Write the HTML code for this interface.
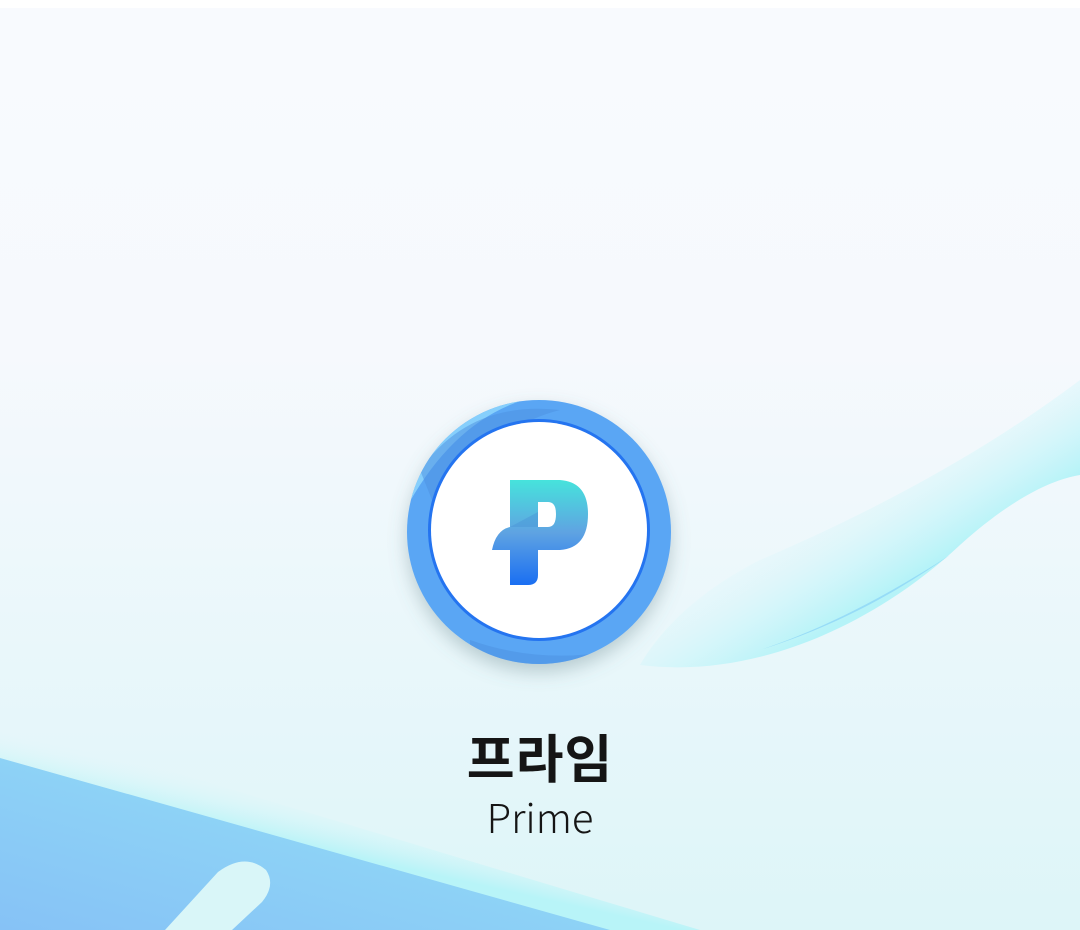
<!DOCTYPE html>
<html><head><meta charset="utf-8"><style>
html,body{margin:0;padding:0;width:1080px;height:930px;overflow:hidden;background:#fff}
svg{position:absolute;left:0;top:0}
.t1{position:absolute;left:0;width:1080px;text-align:center;top:718px;font:bold 52px "Liberation Sans","Noto Sans CJK KR",sans-serif;color:#151515;letter-spacing:1px}
.t2{position:absolute;left:0;width:1080px;text-align:center;top:787px;font:300 40px "Noto Sans CJK KR","Liberation Sans",sans-serif;color:#151515}
</style></head><body>
<svg width="1080" height="930" viewBox="0 0 1080 930">
<defs>
<linearGradient id="bg" x1="0" y1="0" x2="0" y2="1">
<stop offset="0" stop-color="#f8fafe"/><stop offset="0.37" stop-color="#f6f9fd"/><stop offset="1" stop-color="#ddf5f8"/></linearGradient>
<linearGradient id="wave" gradientUnits="userSpaceOnUse" x1="860" y1="610" x2="780" y2="480">
<stop offset="0" stop-color="#b5f3f8"/><stop offset="0.45" stop-color="#d6f6fa" stop-opacity="0.6"/><stop offset="1" stop-color="#f3f8fc" stop-opacity="0"/></linearGradient>
<linearGradient id="blue" x1="0" y1="1" x2="1" y2="0">
<stop offset="0" stop-color="#86c2f6"/><stop offset="1" stop-color="#95e2f7"/></linearGradient>
<linearGradient id="edge" gradientUnits="userSpaceOnUse" x1="300" y1="845" x2="310" y2="800">
<stop offset="0" stop-color="#b8f4f8"/><stop offset="1" stop-color="#e0f6f9" stop-opacity="0"/></linearGradient>
<linearGradient id="pg" x1="0" y1="0" x2="0" y2="1">
<stop offset="0" stop-color="#46e3dc"/><stop offset="0.5" stop-color="#5fa3e2"/><stop offset="1" stop-color="#1a6ff2"/></linearGradient>
<filter id="sh" x="-30%" y="-30%" width="160%" height="160%"><feDropShadow dx="0" dy="8" stdDeviation="9" flood-color="#5a7a80" flood-opacity="0.35"/></filter>
<clipPath id="cc"><circle cx="539" cy="532" r="132"/></clipPath>
</defs>
<rect x="0" y="8" width="1080" height="922" fill="url(#bg)"/>
<path d="M640 665 C760 680 880 620 960 545 C1010 500 1050 480 1080 475 L1080 380 C1000 440 900 500 760 560 C700 590 660 630 640 665Z" fill="url(#wave)"/>
<path d="M760 650 C840 625 900 590 950 555 C880 600 820 630 760 650Z" fill="#8fd6f6" opacity="0.8"/>
<path d="M0 720 L700 930 L0 930Z" fill="url(#edge)"/>
<path d="M0 758 L610 930 L0 930Z" fill="url(#blue)"/>
<path d="M218 872 Q245 852 266 870 Q276 885 262 902 L232 930 L165 930Z" fill="#d9f6f8"/>
<g filter="url(#sh)"><circle cx="539" cy="532" r="132" fill="#5aa6f4"/></g>
<g clip-path="url(#cc)">
<path d="M400 520 Q450 420 530 398 L400 390Z" fill="#86cffc"/>
<path d="M612 405 Q670 460 678 540 L700 540 L700 395Z" fill="#86cffc"/>
<path d="M400 550 Q430 630 490 660 L400 680Z" fill="#86cffc"/>
<path d="M600 655 Q660 610 676 560 L690 680Z" fill="#86cffc"/>
<path d="M420 470 Q470 400 560 410 Q480 430 440 520Z" fill="#4b8fe0" opacity="0.5"/>
<path d="M470 650 Q540 680 620 650 Q540 665 470 640Z" fill="#4b8fe0" opacity="0.5"/>
</g>
<circle cx="539" cy="530" r="111" fill="#2474f0"/>
<circle cx="539" cy="530" r="108" fill="#fff"/>
<path d="M510 480 L560 480 Q588 482 588 514 Q588 548 560 550 L538 550 L538 575 Q538 585 528 585 L510 585 L510 550 L492 550 Q496 530 510 527Z M538 502 L538 527 L548 527 Q556 527 556 514 Q556 502 548 502Z" fill="url(#pg)" fill-rule="evenodd"/>
<path d="M510 527 L538 512 L538 527Z" fill="#4a95d8" opacity="0.5"/>
<rect x="0" y="0" width="1080" height="8" fill="#fff"/>
</svg>
<div class="t1">프라임</div>
<div class="t2">Prime</div>
</body></html>
